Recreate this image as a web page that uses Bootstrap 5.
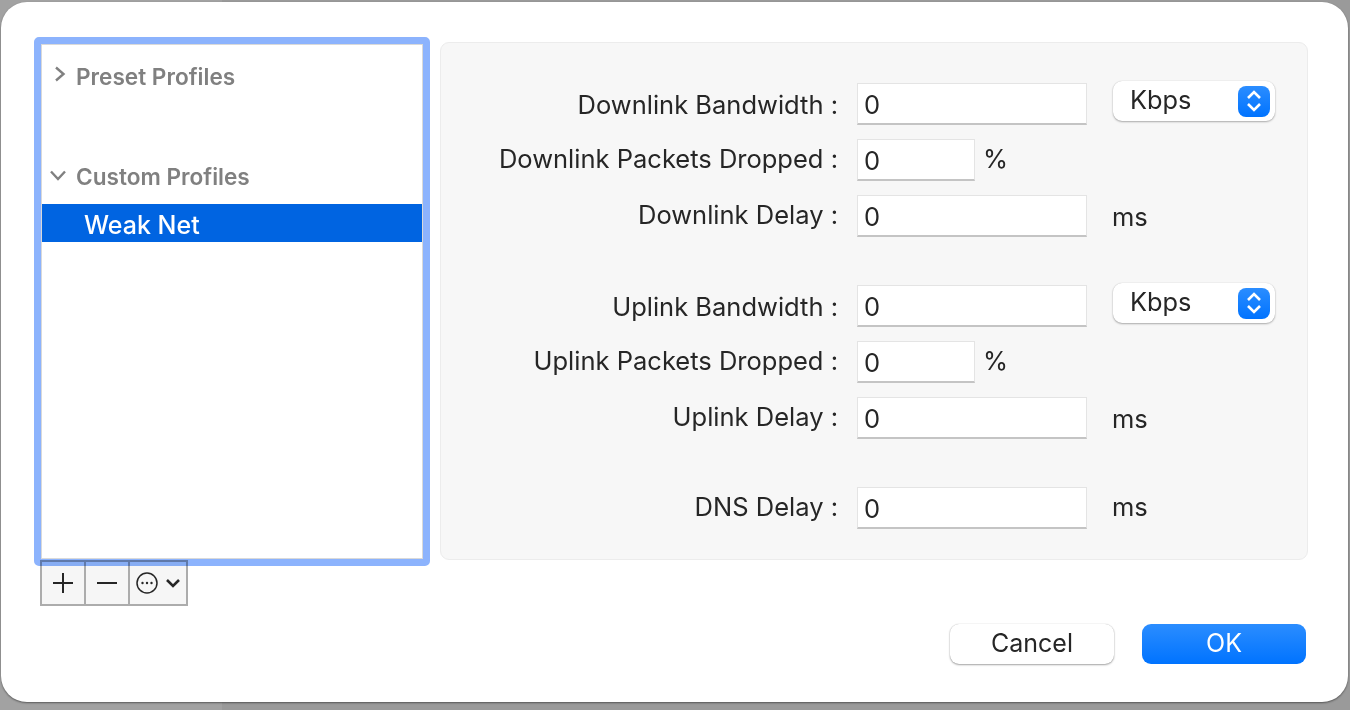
<!DOCTYPE html>
<html lang="en">
<head>
    <meta charset="UTF-8">
    <title>Network Link Conditioner</title>
    <link href="https://cdn.jsdelivr.net/npm/bootstrap@5.3.3/dist/css/bootstrap.min.css" rel="stylesheet">
    <style>
        html, body { height: 710px; overflow: hidden; }
        body {
            background: linear-gradient(90deg, #a2a2a2 222px, #9a9a9a 222px);
            font-family: Inter, "Liberation Sans", sans-serif;
            color: #262626;
            padding: 2px 2px 8px 1px;
        }
        .sheet {
            width: 1347px;
            height: 700px;
            background: #fff;
            border-radius: 26px;
            box-shadow: 0 1px 2px rgba(0,0,0,.45);
            padding: 35px 40px 0 33px;
        }
        .sidebar-col { width: 396px; }
        .profile-ring {
            height: 529px;
            border: 7px solid #8cb3fd;
            border-radius: 5px;
            box-shadow: inset 0 0 0 1px #d9d9d9;
            padding: 1px;
        }
        .group-head {
            font-size: 22.6px;
            font-weight: 600;
            color: #808080;
            height: 38px;
            padding-left: 34px;
            position: relative;
            line-height: 38px;
        }
        .group-head svg { position: absolute; }
        .profile-row {
            background: #0064e1;
            color: #fff;
            font-size: 25px;
            font-weight: 500;
            height: 38px;
            line-height: 42px;
            padding-left: 42px;
            margin-top: 8px;
        }
        .tool-bar {
            margin-left: 6px;
            margin-top: -6px;
            width: 148px;
            height: 46px;
            border: 2px solid #acacac;
            background: #f6f6f6;
            position: relative;
        }
        /* focus ring of the list runs over the top of the toolbar */
        .tool-bar::after {
            content: "";
            position: absolute;
            top: -2px;
            left: -2px;
            right: -2px;
            height: 6px;
            background: #8cb3fd;
            mix-blend-mode: multiply;
        }
        .tool-btn { border-right: 2px solid #acacac; height: 100%; width: 44px; }
        .tool-btn:last-child { border-right: 0; flex: 1; }
        .settings-panel {
            width: 868px;
            height: 518px;
            margin-top: 5px;
            margin-left: 10px;
            background: #f7f7f7;
            border: 1px solid #ececec;
            border-radius: 9px;
            padding-top: 40px;
        }
        .field-row { height: 42px; margin-bottom: 14px; }
        .field-row.group-end { margin-bottom: 48px; }
        .field-label {
            width: 397px;
            margin-right: 19px;
            text-align: right;
            font-size: 25.5px;
            line-height: 42px;
            white-space: nowrap;
            position: relative;
            top: -1px;
        }
        .field-label.label-low { top: 1px; }
        .field-input {
            width: 230px;
            height: 42px;
            border: 1px solid #e4e4e4;
            border-bottom: 2px solid #c4c4c4;
            background: #fff;
            font-size: 25.5px;
            padding: 2px 6px 0;
            color: #262626;
            border-radius: 0;
            outline: 0;
            font-family: inherit;
        }
        .field-input.short-input { width: 118px; }
        .unit-text { font-size: 25.5px; line-height: 42px; margin-left: 8px; position: relative; top: -1px; }
        .unit-ms { margin-left: 25px; top: 1px; }
        .unit-ms.unit-up { top: -1px; }
        .unit-select {
            margin-left: 26px;
            margin-top: -2px;
            width: 162px;
            height: 40px;
            background: #fff;
            border-radius: 9px;
            box-shadow: 0 1px 2px rgba(0,0,0,.3), 0 0 1px rgba(0,0,0,.2);
            font-size: 25.3px;
            padding: 0 5px 0 17px;
        }
        .unit-select > span:first-child { position: relative; top: -1px; }
        .select-stepper {
            width: 32px;
            height: 31px;
            border-radius: 8px;
            background: linear-gradient(#2b8dff, #0073ff);
        }
        .sheet-btn {
            width: 164px;
            height: 40px;
            border-radius: 9px;
            font-size: 25px;
            line-height: 36px;
            padding: 0 0 3px;
            border: 0;
        }
        .btn-cancel {
            background: #fff;
            color: #262626;
            box-shadow: 0 1px 2px rgba(0,0,0,.35), 0 0 1px rgba(0,0,0,.25);
        }
        .btn-ok { background: linear-gradient(#2b8dff, #0073ff); color: #fff; }
        .footer-bar { gap: 28px; margin-top: 18px; margin-right: 2px; }
    </style>
</head>
<body>
    <div class="sheet">
        <div class="d-flex">
            <!-- profile list -->
            <div class="sidebar-col">
                <div class="profile-ring">
                    <div class="group-head" style="margin-top:13px">
                        <svg width="12" height="16" viewBox="0 0 12 16" style="left:12px;top:8px" fill="none" stroke="#808080" stroke-width="2.400"><path d="M2 1.500 9.500 8 2 14.500"/></svg>
                        Preset Profiles
                    </div>
                    <div style="height:62px"></div>
                    <div class="group-head">
                        <svg width="16" height="11" viewBox="0 0 16 11" style="left:8px;top:12px" fill="none" stroke="#808080" stroke-width="2.400"><path d="M1 1.500 8 9 15 1.500"/></svg>
                        Custom Profiles
                    </div>
                    <div class="profile-row">Weak Net</div>
                </div>
                <div class="tool-bar d-flex">
                    <div class="tool-btn d-flex align-items-center justify-content-center">
                        <svg width="22" height="22" viewBox="0 0 22 22" stroke="#262626" stroke-width="2"><path d="M11 1V21M1 11H21"/></svg>
                    </div>
                    <div class="tool-btn d-flex align-items-center justify-content-center">
                        <svg width="22" height="22" viewBox="0 0 22 22" stroke="#262626" stroke-width="2"><path d="M1 11H21"/></svg>
                    </div>
                    <div class="tool-btn d-flex align-items-center justify-content-center gap-2">
                        <svg width="22" height="22" viewBox="0 0 22 22" fill="none" stroke="#262626" stroke-width="1.500"><circle cx="11" cy="11" r="10"/><g fill="#262626" stroke="none"><circle cx="6.500" cy="11" r="1.200"/><circle cx="11" cy="11" r="1.200"/><circle cx="15.500" cy="11" r="1.200"/></g></svg>
                        <svg width="14" height="10" viewBox="0 0 14 10" fill="none" stroke="#262626" stroke-width="2.600"><path d="M1 2 7 8 13 2"/></svg>
                    </div>
                </div>
            </div>

            <!-- settings form -->
            <div class="settings-panel">
                <div class="field-row d-flex align-items-start">
                    <div class="field-label label-low">Downlink Bandwidth :</div>
                    <input class="field-input" value="0">
                    <div class="unit-select d-flex align-items-center justify-content-between">
                        <span>Kbps</span>
                        <span class="select-stepper d-flex align-items-center justify-content-center">
                            <svg width="20" height="26" viewBox="0 0 20 26" fill="none" stroke="#fff" stroke-width="2.600"><path d="M4 10 10 4 16 10M4 16 10 22 16 16"/></svg>
                        </span>
                    </div>
                </div>
                <div class="field-row d-flex align-items-start">
                    <div class="field-label">Downlink Packets Dropped :</div>
                    <input class="field-input short-input" value="0">
                    <div class="unit-text">%</div>
                </div>
                <div class="field-row group-end d-flex align-items-start">
                    <div class="field-label">Downlink Delay :</div>
                    <input class="field-input" value="0">
                    <div class="unit-text unit-ms">ms</div>
                </div>

                <div class="field-row d-flex align-items-start">
                    <div class="field-label label-low">Uplink Bandwidth :</div>
                    <input class="field-input" value="0">
                    <div class="unit-select d-flex align-items-center justify-content-between">
                        <span>Kbps</span>
                        <span class="select-stepper d-flex align-items-center justify-content-center">
                            <svg width="20" height="26" viewBox="0 0 20 26" fill="none" stroke="#fff" stroke-width="2.600"><path d="M4 10 10 4 16 10M4 16 10 22 16 16"/></svg>
                        </span>
                    </div>
                </div>
                <div class="field-row d-flex align-items-start">
                    <div class="field-label">Uplink Packets Dropped :</div>
                    <input class="field-input short-input" value="0">
                    <div class="unit-text">%</div>
                </div>
                <div class="field-row group-end d-flex align-items-start">
                    <div class="field-label">Uplink Delay :</div>
                    <input class="field-input" value="0">
                    <div class="unit-text unit-ms">ms</div>
                </div>

                <div class="field-row d-flex align-items-start">
                    <div class="field-label">DNS Delay :</div>
                    <input class="field-input" value="0">
                    <div class="unit-text unit-ms unit-up">ms</div>
                </div>
            </div>
        </div>
        <div class="footer-bar d-flex justify-content-end">
            <button class="btn sheet-btn btn-cancel">Cancel</button>
            <button class="btn sheet-btn btn-ok">OK</button>
        </div>
    </div>
    <script src="https://cdn.jsdelivr.net/npm/bootstrap@5.3.3/dist/js/bootstrap.bundle.min.js"></script>
</body>
</html>
